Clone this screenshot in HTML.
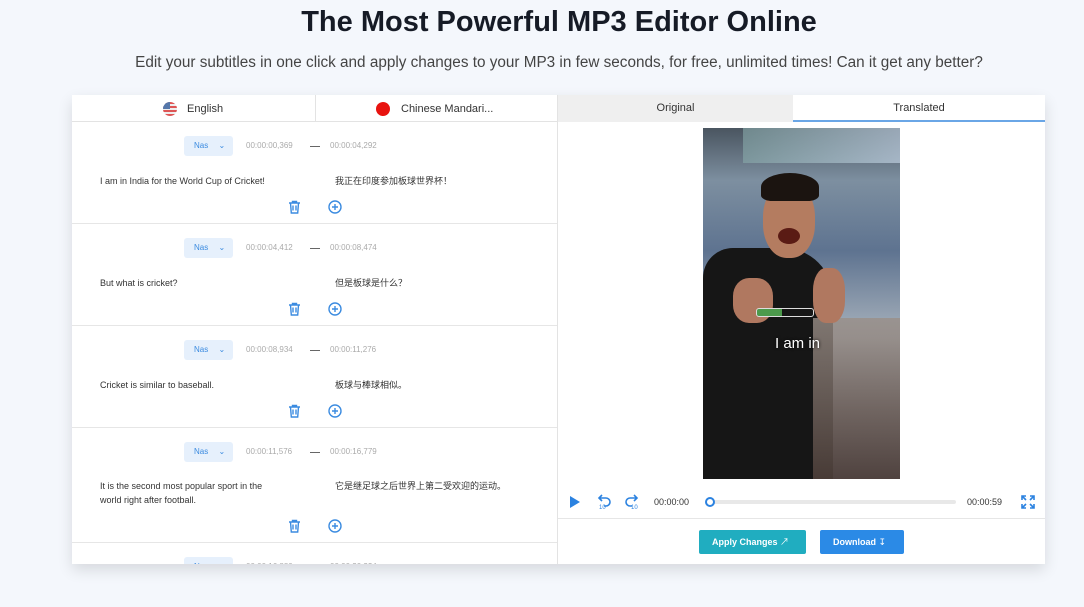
<!DOCTYPE html>
<html><head><meta charset="utf-8"><style>
*{margin:0;padding:0;box-sizing:border-box}
body{width:1084px;height:607px;background:#f4f7fc;font-family:"Liberation Sans","Noto Sans CJK SC",sans-serif;position:relative;overflow:hidden;color:#222}
.a{position:absolute}
h1{position:absolute;top:6px;left:0;width:1118px;text-align:center;font-size:29px;font-weight:bold;color:#161b26}
.sub{top:54px;left:0;width:1118px;text-align:center;font-size:15.3px;color:#444}
.card{left:72px;top:95px;width:973px;height:469px;background:#fff;box-shadow:0 6px 14px rgba(0,0,0,.12);overflow:hidden}
.pill{width:49px;height:20px;background:#e6f0fc;border-radius:3px;color:#3b8be0;font-size:8px;line-height:20px;padding-left:10px}
.t{font-size:8px;color:#aaa}
.tx{font-size:9px;color:#333}
.row{position:absolute;left:0;width:485px;border-bottom:1px solid #e6e6e6}
</style></head><body>
<h1>The Most Powerful MP3 Editor Online</h1>
<div class="a sub">Edit your subtitles in one click and apply changes to your MP3 in few seconds, for free, unlimited times! Can it get any better?</div>
<div class="a card">
 <div class="a" style="left:0;top:0;width:485px;height:27px;border-bottom:1px solid #e3e3e3"></div>
 <div class="a" style="left:243px;top:0;width:1px;height:27px;background:#e3e3e3"></div>
 <div class="a" style="left:91px;top:7px;width:14px;height:14px;border-radius:50%;overflow:hidden;background:repeating-linear-gradient(#d55 0 2px,#eee 2px 4px)"><div style="width:7px;height:7px;background:#5577aa"></div></div>
 <div class="a" style="left:115px;top:8px;font-size:11px;color:#333">English</div>
 <div class="a" style="left:304px;top:7px;width:14px;height:14px;border-radius:50%;background:#e8130f"></div>
 <div class="a" style="left:329px;top:8px;font-size:11px;color:#333">Chinese Mandari...</div>
 <div class="a" style="left:485px;top:0;width:1px;height:469px;background:#e3e3e3"></div>

 <div id="rows"></div>

 <div class="a" style="left:486px;top:0;width:235px;height:27px;background:#efefef;text-align:center;font-size:11px;line-height:27px;color:#333">Original</div>
 <div class="a" style="left:721px;top:0;width:252px;height:27px;text-align:center;font-size:11px;line-height:27px;color:#333;border-bottom:2px solid #6aa6e6">Translated</div>
 <div class="a" style="left:631px;top:33px;width:197px;height:351px;overflow:hidden;background:linear-gradient(180deg,#4a5560 0%,#7d8fa0 15%,#5e7390 35%,#a9b3bd 60%,#6b6a70 80%,#3d3c44 100%)">
  <div class="a" style="left:40px;top:0;width:157px;height:35px;background:linear-gradient(90deg,#8aa,#cde);opacity:.6"></div>
  <div class="a" style="left:0;top:120px;width:130px;height:231px;background:#161616;border-radius:30px 50px 0 0"></div>
  <div class="a" style="left:110px;top:190px;width:87px;height:161px;background:linear-gradient(#9a8f88,#54443e);opacity:.8"></div>
  <div class="a" style="left:60px;top:55px;width:52px;height:75px;background:#b47c60;border-radius:45%"></div>
  <div class="a" style="left:58px;top:45px;width:58px;height:28px;background:#1b1410;border-radius:50% 50% 20% 20%"></div>
  <div class="a" style="left:75px;top:100px;width:22px;height:16px;background:#5a1b14;border-radius:50%"></div>
  <div class="a" style="left:30px;top:150px;width:40px;height:45px;background:#b07860;border-radius:40%"></div>
  <div class="a" style="left:110px;top:140px;width:32px;height:55px;background:#b07860;border-radius:40%"></div>
  <div class="a" style="left:53px;top:180px;width:58px;height:9px;border:1px solid #ddd;border-radius:3px;background:linear-gradient(90deg,#4c9a4c 45%,transparent 45%)"></div>
  <div class="a" style="left:72px;top:207px;font-size:15px;color:#fff;text-shadow:0 0 3px #000">I am in</div>
 </div>
 <svg class="a" style="left:496px;top:399px" width="14" height="16"><path d="M2 2L12 8L2 14Z" fill="#2b82e0"/></svg>
 <svg class="a" style="left:524px;top:398px" width="16" height="16" fill="none" stroke="#2b82e0" stroke-width="1.6"><path d="M4 5h6a4 4 0 010 8H8M6 2L3 5l3 3"/><text x="3" y="16" font-size="6" fill="#2b82e0" stroke="none">10</text></svg>
 <svg class="a" style="left:552px;top:398px" width="16" height="16" fill="none" stroke="#2b82e0" stroke-width="1.6"><path d="M12 5H6a4 4 0 000 8h2M10 2l3 3-3 3"/><text x="7" y="16" font-size="6" fill="#2b82e0" stroke="none">10</text></svg>
 <div class="a" style="left:582px;top:402px;font-size:9px;color:#333">00:00:00</div>
 <div class="a" style="left:636px;top:405px;width:248px;height:4px;background:#e8e8e8;border-radius:2px"></div>
 <div class="a" style="left:633px;top:402px;width:10px;height:10px;border-radius:50%;border:2px solid #2b82e0;background:#fff"></div>
 <div class="a" style="left:895px;top:402px;font-size:9px;color:#333">00:00:59</div>
 <svg class="a" style="left:949px;top:400px" width="14" height="14" fill="none" stroke="#2b82e0" stroke-width="1.6"><path d="M1 5V1h4M1 1l4 4M13 5V1H9M13 1L9 5M1 9v4h4M1 13l4-4M13 9v4H9M13 13L9 9"/></svg>
 <div class="a" style="left:486px;top:423px;width:487px;height:1px;background:#e6e6e6"></div>
 <div class="a" style="left:627px;top:435px;width:107px;height:24px;background:#20adc0;border-radius:2px;color:#fff;font-size:9px;font-weight:bold;line-height:24px;padding-left:13px">Apply Changes <span style="font-weight:normal">&#8599;</span></div>
 <div class="a" style="left:748px;top:435px;width:84px;height:24px;background:#2b8ae6;border-radius:2px;color:#fff;font-size:9px;font-weight:bold;line-height:24px;padding-left:13px">Download <span style="font-weight:normal">&#8615;</span></div>
</div>
<script>
var d=[["00:00:00,369","00:00:04,292","I am in India for the World Cup of Cricket!","我正在印度参加板球世界杯！"],
["00:00:04,412","00:00:08,474","But what is cricket?","但是板球是什么？"],
["00:00:08,934","00:00:11,276","Cricket is similar to baseball.","板球与棒球相似。"],
["00:00:11,576","00:00:16,779","It is the second most popular sport in the<br>world right after football.","它是继足球之后世界上第二受欢迎的运动。"],
["00:00:16,880","00:00:20,224","",""]];
var tops=[27,129,231,333,448],hs=[102,102,102,115,60],h="";
var trash='<svg width="13" height="14" fill="none" stroke="#3b8be0" stroke-width="1.4"><path d="M1 3h11M4.5 3V1.5h4V3M2.5 3l.8 10h6.4l.8-10M5 5.5v5M8 5.5v5"/></svg>';
var plus='<svg width="14" height="14" fill="none" stroke="#3b8be0" stroke-width="1.4"><circle cx="7" cy="7" r="6"/><path d="M7 4v6M4 7h6"/></svg>';
d.forEach(function(r,i){
h+='<div class="row" style="top:'+tops[i]+'px;height:'+hs[i]+'px">'+
'<div class="a pill" style="left:112px;top:14px">Nas <span style="margin-left:8px">&#8964;</span></div>'+
'<div class="a t" style="left:174px;top:19px">'+r[0]+'</div>'+
'<div class="a" style="left:238px;top:24px;width:10px;height:1px;background:#666"></div>'+
'<div class="a t" style="left:258px;top:19px">'+r[1]+'</div>'+
'<div class="a tx" style="left:28px;top:'+(i==3?51:52)+'px;width:195px;line-height:14px;text-align:justify">'+r[2]+'</div>'+
'<div class="a tx" style="left:263px;top:'+(i==3?51:52)+'px;line-height:14px">'+r[3]+'</div>'+
(r[2]?'<div class="a" style="left:216px;top:'+(i==3?91:78)+'px">'+trash+'</div><div class="a" style="left:256px;top:'+(i==3?91:78)+'px">'+plus+'</div>':'')+
'</div>';});
document.getElementById('rows').innerHTML=h;
</script>
</body></html>
